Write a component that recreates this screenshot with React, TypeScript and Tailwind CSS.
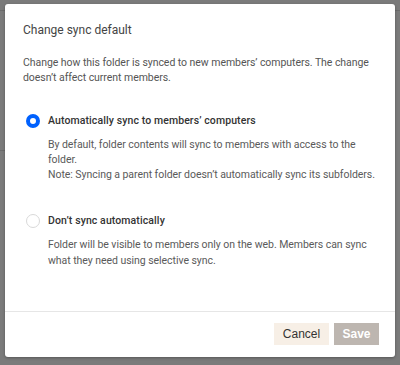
import React from "react";

export default function App() {
  return (
    <div className="w-[400px] h-[365px] bg-[#7b7b7b] relative overflow-hidden" style={{ fontFamily: "Roboto, 'Noto Sans', sans-serif" }}>
      <div className="absolute left-0 right-0 top-[10px] h-px bg-[#6c6c6c]" />
      <div className="absolute left-0 w-[5px] top-[150px] h-px bg-[#6c6c6c]" />
      <div className="absolute left-[5px] top-[4px] w-[390px] h-[353px] bg-white rounded-[3px] shadow-[0_1px_3px_rgba(0,0,0,0.3)] flex flex-col">
        <div className="pl-[18px] pr-[12px] pt-[18px] flex-1">
          <div className="text-[12px] leading-[16px] text-[#444]">Change sync default</div>
          <div className="mt-[17px] text-[10.5px] leading-[15px] text-[#555] tracking-[-0.05px]">
            Change how this folder is synced to new members’ computers. The change doesn’t affect current members.
          </div>
          <div className="mt-[27px] flex">
            <div className="mt-[2px] ml-[3px] w-[14px] h-[14px] rounded-full border-[4px] border-[#0061fe] shrink-0" />
            <div className="ml-[8px]">
              <div className="text-[10.5px] leading-[18px] font-medium text-[#333] tracking-[0.1px]">Automatically sync to members’ computers</div>
              <div className="mt-[7px] text-[10.5px] leading-[15px] text-[#5a5a5a] tracking-[-0.05px]">
                By default, folder contents will sync to members with access to the folder.
                <br />
                Note: Syncing a parent folder doesn’t automatically sync its subfolders.
              </div>
            </div>
          </div>
          <div className="mt-[30px] flex">
            <div className="mt-[2px] ml-[3px] w-[14px] h-[14px] rounded-full border border-[#d9d9d9] shrink-0" />
            <div className="ml-[8px]">
              <div className="text-[10.5px] leading-[18px] font-medium text-[#333] tracking-[0.1px]">Don’t sync automatically</div>
              <div className="mt-[7px] text-[10.5px] leading-[16px] text-[#5a5a5a] tracking-[-0.05px]">
                Folder will be visible to members only on the web. Members can sync what they need using selective sync.
              </div>
            </div>
          </div>
        </div>
        <div className="h-px bg-[#e6e6e6]" />
        <div className="flex justify-end gap-[5px] pr-[16px] pt-[11px] pb-[12px]" style={{ fontFamily: "'Liberation Sans', Arial, sans-serif" }}>
          <button className="w-[55px] h-[22px] bg-[#f7efe6] text-[12px] text-[#333]">Cancel</button>
          <button className="w-[45px] h-[22px] bg-[#bdb6b0] text-[12px] font-bold text-white">Save</button>
        </div>
      </div>
    </div>
  );
}
